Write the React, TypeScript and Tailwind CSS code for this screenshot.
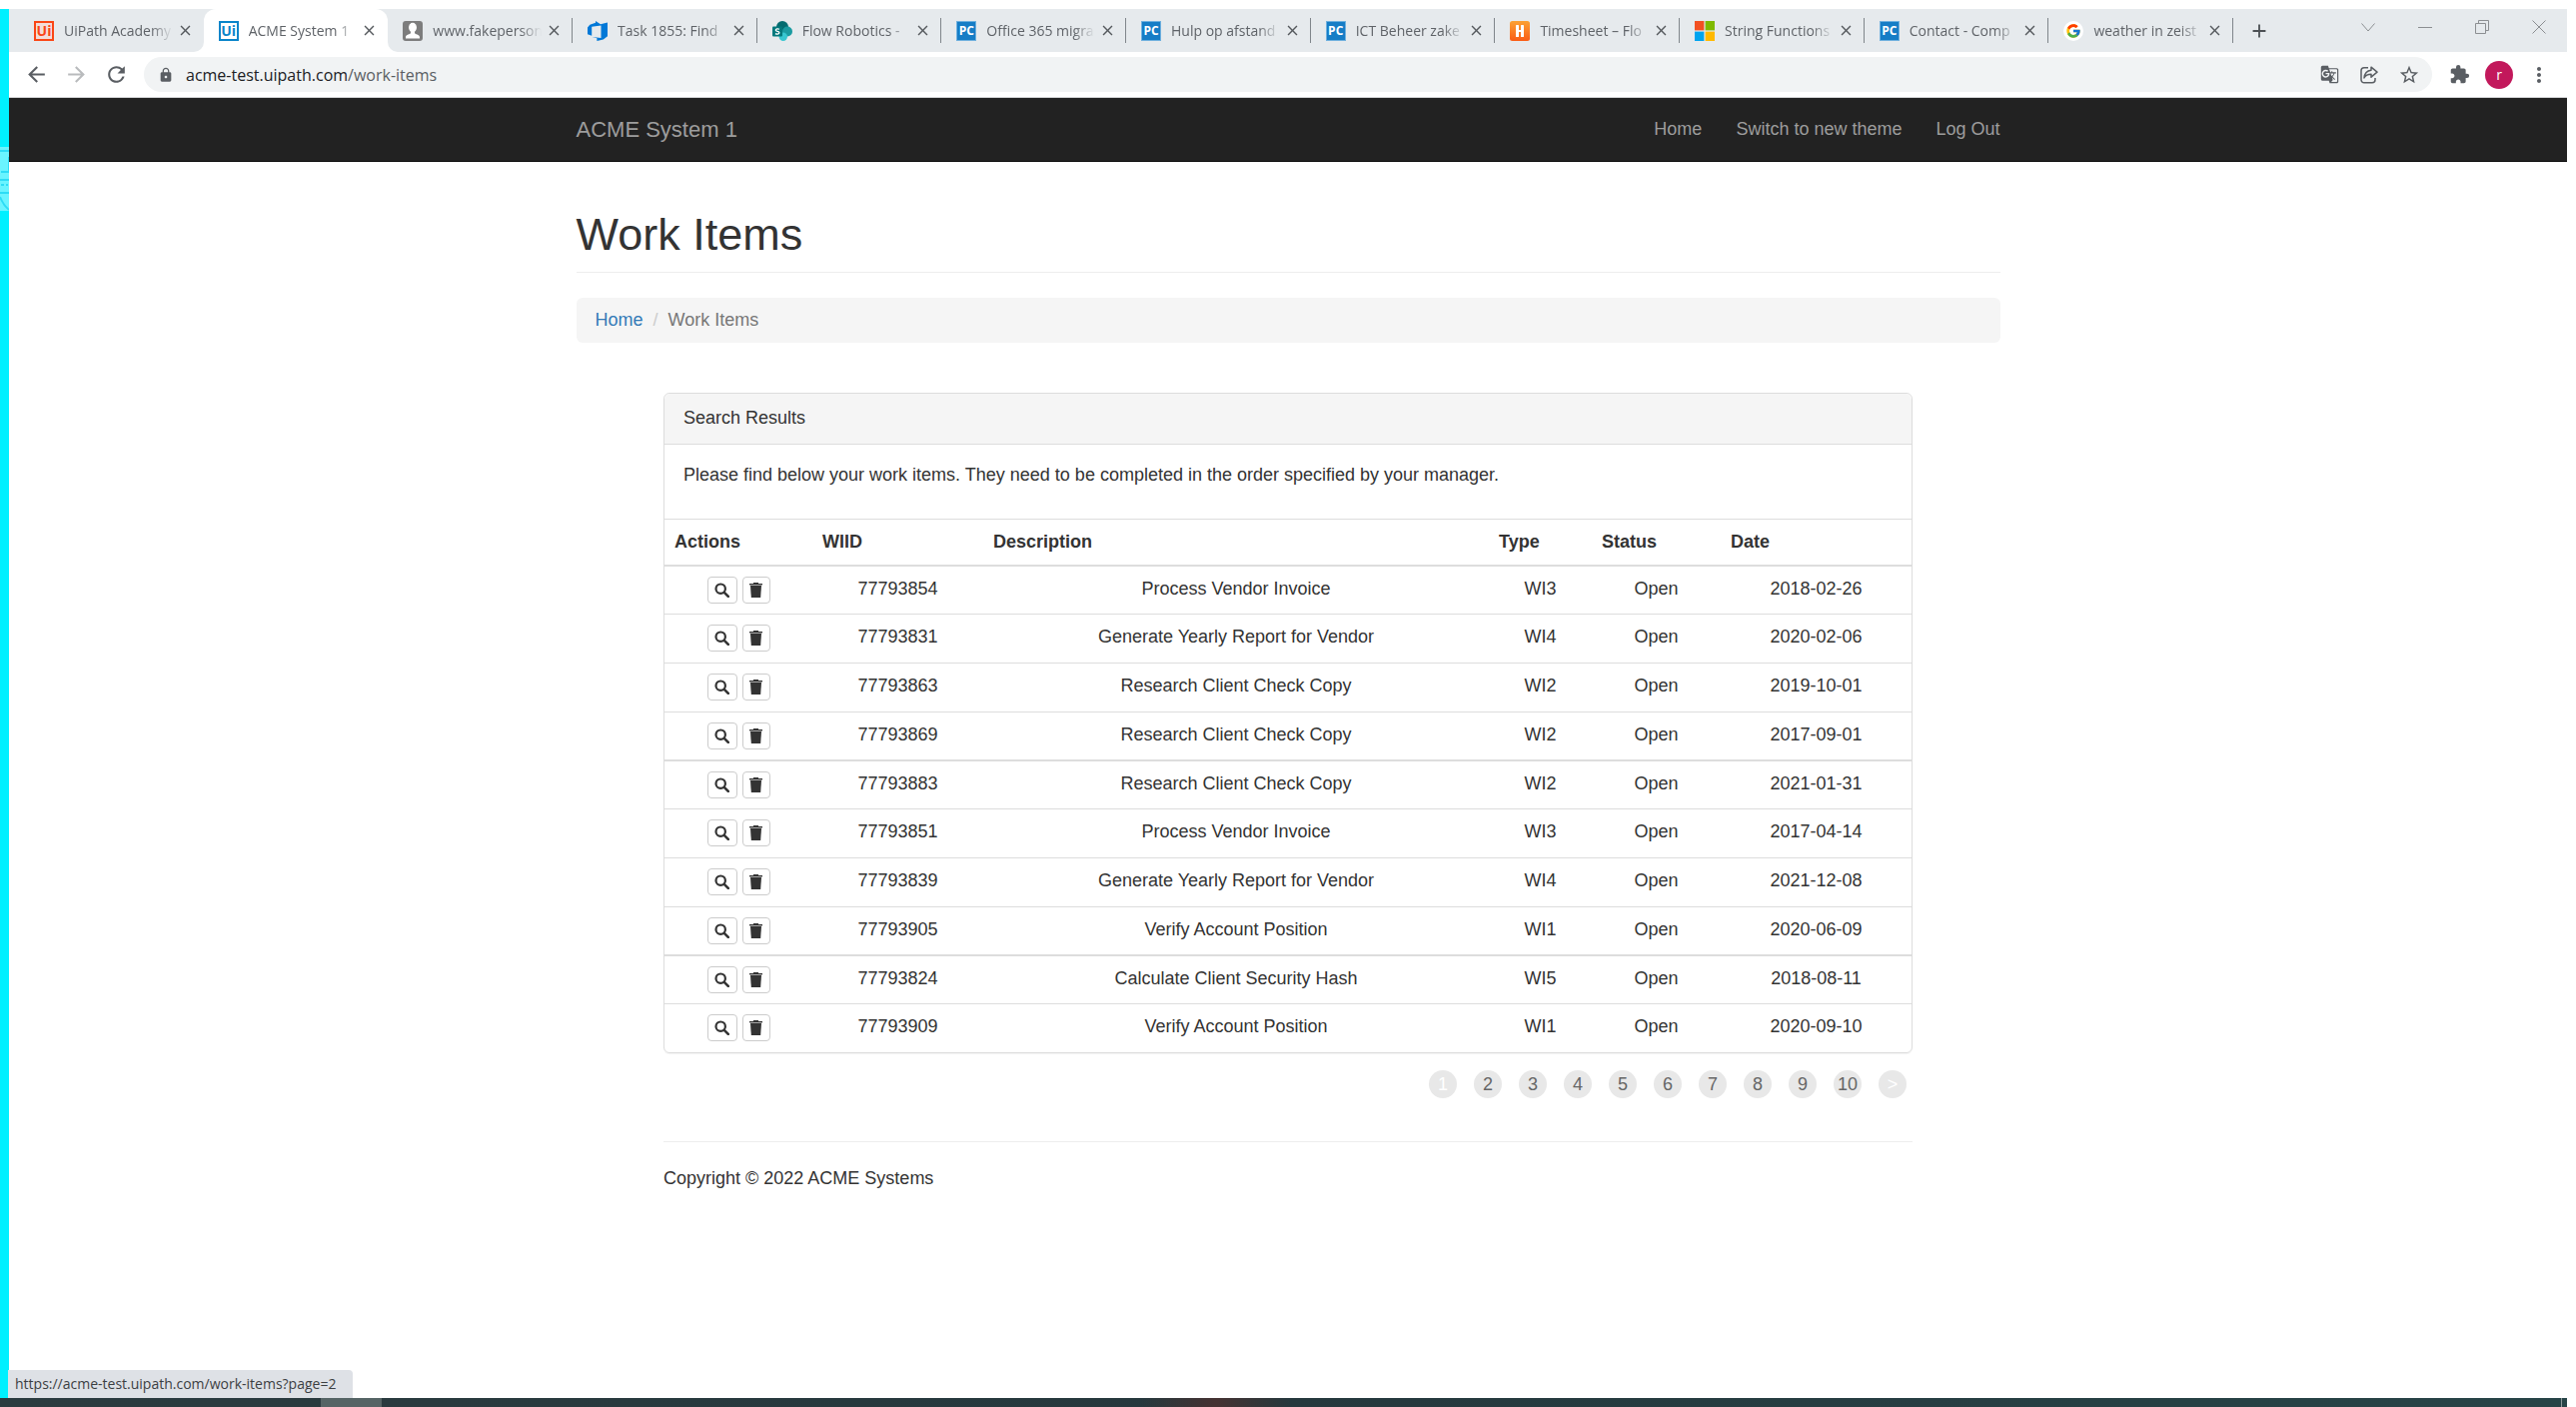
import React from "react";
import {
  MdArrowBack,
  MdArrowForward,
  MdRefresh,
  MdLock,
  MdGTranslate,
  MdStarBorder,
  MdExtension,
  MdMoreVert,
  MdClose,
  MdAdd,
} from "react-icons/md";
import { FcGoogle } from "react-icons/fc";

const UI_FONT = "font-['Open_Sans','Noto_Sans',sans-serif]";
const PAGE_FONT = "font-['Liberation_Sans',Arial,sans-serif]";

function UiOrange() {
  return (
    <span className="flex size-5 items-center justify-center border-2 border-[#fa4616] bg-[#f3dcd8] text-sm leading-none font-bold text-[#fa4616]">
      Ui
    </span>
  );
}

function UiBlue() {
  return (
    <span className="flex size-5 items-center justify-center border-2 border-[#0a85ca] bg-white text-sm leading-none font-bold text-[#0a85ca]">
      Ui
    </span>
  );
}

function PcIcon() {
  return (
    <span className="flex size-5 items-center justify-center border border-[#6fb0de] bg-[#167dc6] text-xs leading-none font-bold text-white">
      PC
    </span>
  );
}

function HIcon() {
  return (
    <svg viewBox="0 0 20 20" className="size-5">
      <defs>
        <linearGradient id="harvest" x1="0" y1="0" x2="0" y2="1">
          <stop offset="0" stopColor="#fba133" />
          <stop offset="1" stopColor="#fa5d16" />
        </linearGradient>
      </defs>
      <rect width="20" height="20" rx="2.5" fill="url(#harvest)" />
      <rect x="6" y="4" width="3" height="12" rx="0.6" fill="#fff" />
      <rect x="11" y="4" width="3" height="12" rx="0.6" fill="#fff" />
      <rect x="8" y="9" width="4" height="2" fill="#fff" />
    </svg>
  );
}

function PersonIcon() {
  return (
    <svg viewBox="0 0 20 20" className="size-5">
      <rect width="20" height="20" rx="3" fill="#7d7d7d" />
      <ellipse cx="10" cy="6.6" rx="4" ry="4.8" fill="#fff" />
      <path d="M8 10h4v2.2c0 .8 5 1.4 5 3.8v1.500H3V16c0-2.400 5-3 5-3.800z" fill="#fff" />
    </svg>
  );
}

function DevOpsIcon() {
  return (
    <svg viewBox="0 0 20 20" className="size-5">
      <path
        fill="#0078d7"
        d="M0 6.600 2.300 3.800 8 1.700V0l5 3.200 7-1.700v13.700l-4.200 3.300-6.400 1.500v-2.700L4.600 16l8.900 1V4.500L4.200 5.800v9L0 13.200z"
      />
    </svg>
  );
}

function SharePointIcon() {
  return (
    <svg viewBox="0 0 20 20" className="size-5">
      <circle cx="10" cy="6" r="6" fill="#036c70" />
      <circle cx="15" cy="10.500" r="5" fill="#1a9ba1" />
      <circle cx="10.800" cy="15.800" r="4.200" fill="#37c6d0" />
      <rect y="5.500" width="10" height="10" rx="1" fill="#03787c" />
      <path
        d="M7 8.300C5.500 7.500 3.300 7.800 3.300 9.200c0 1.600 3.600.9 3.600 2.600 0 1.400-2.500 1.600-3.900.8"
        fill="none"
        stroke="#fff"
        strokeWidth="1.300"
      />
    </svg>
  );
}

function MicrosoftIcon() {
  return (
    <svg viewBox="0 0 20 20" className="size-5">
      <path fill="#f25022" d="M0 0h9.400v9.400H0z" />
      <path fill="#7fba00" d="M10.600 0H20v9.400h-9.400z" />
      <path fill="#00a4ef" d="M0 10.600h9.400V20H0z" />
      <path fill="#ffb900" d="M10.600 10.600H20V20h-9.400z" />
    </svg>
  );
}

function GoogleIcon() {
  return (
    <span className="flex size-5 items-center justify-center rounded-full bg-white">
      <FcGoogle className="size-4" />
    </span>
  );
}

const tabs = [
  { title: "UiPath Academy", icon: <UiOrange /> },
  { title: "ACME System 1", icon: <UiBlue />, active: true },
  { title: "www.fakeperson", icon: <PersonIcon /> },
  { title: "Task 1855: Find", icon: <DevOpsIcon /> },
  { title: "Flow Robotics -", icon: <SharePointIcon /> },
  { title: "Office 365 migra", icon: <PcIcon /> },
  { title: "Hulp op afstand", icon: <PcIcon /> },
  { title: "ICT Beheer zake", icon: <PcIcon /> },
  { title: "Timesheet – Flo", icon: <HIcon /> },
  { title: "String Functions", icon: <MicrosoftIcon /> },
  { title: "Contact - Comp", icon: <PcIcon /> },
  { title: "weather in zeist", icon: <GoogleIcon /> },
];

function TabStrip() {
  return (
    <div className="flex h-[43px] items-stretch bg-[#e6eaed] pl-2.5">
      <div className="flex min-w-0 max-w-[2216px] flex-1">
        {tabs.map((tab, i) => (
          <div
            key={tab.title}
            className={
              tab.active
                ? "relative flex min-w-0 flex-1 items-center rounded-t-xl bg-white pr-2.5 pl-[15px]"
                : "relative flex min-w-0 flex-1 items-center pr-2.5 pl-[15px]"
            }
          >
            {tab.active && (
              <>
                <svg viewBox="0 0 10 10" className="absolute bottom-0 -left-2.5 size-2.5">
                  <path d="M10 0v10H0A10 10 0 0 0 10 0z" fill="#fff" />
                </svg>
                <svg viewBox="0 0 10 10" className="absolute -right-2.5 bottom-0 size-2.5">
                  <path d="M0 0v10h10A10 10 0 0 1 0 0z" fill="#fff" />
                </svg>
              </>
            )}
            <span className="shrink-0">{tab.icon}</span>
            <span className="ml-2.5 min-w-0 flex-1 overflow-hidden text-sm whitespace-nowrap text-[#5f6368] [mask-image:linear-gradient(to_right,black_80%,transparent)]">
              {tab.title}
            </span>
            <button aria-label={`Close ${tab.title}`} className="ml-1 shrink-0">
              <MdClose className="size-[17px] text-[#55595d]" />
            </button>
            {i > 1 && <span className="absolute top-[9px] right-0 h-[25px] w-px bg-[#80868b]" />}
          </div>
        ))}
      </div>
      <button aria-label="New tab" className="flex w-[52px] items-center justify-center">
        <MdAdd className="size-[22px] text-[#4d5155]" />
      </button>
      <div className="ml-auto flex h-9 text-[#8c8f92]">
        <button aria-label="Search tabs" className="flex w-[57px] items-center justify-center">
          <svg viewBox="0 0 14 14" className="size-3.5" fill="none" stroke="currentColor">
            <path d="m.5 3.500 6.500 7.500 6.500-7.500" />
          </svg>
        </button>
        <button aria-label="Minimize" className="flex w-[57px] items-center justify-center">
          <svg viewBox="0 0 14 14" className="size-3.5" fill="none" stroke="currentColor">
            <path d="M0 7.500h14" />
          </svg>
        </button>
        <button aria-label="Restore" className="flex w-[57px] items-center justify-center">
          <svg viewBox="0 0 14 14" className="size-3.5" fill="none" stroke="currentColor">
            <path d="M.5 3.500h10v10H.5zM3.500 3.500v-3h10v10h-3" />
          </svg>
        </button>
        <button aria-label="Close window" className="flex w-[57px] items-center justify-center">
          <svg viewBox="0 0 14 14" className="size-3.5" fill="none" stroke="currentColor">
            <path d="m.5.500 13 13M13.500.500l-13 13" />
          </svg>
        </button>
      </div>
    </div>
  );
}

function Toolbar() {
  return (
    <div className="flex h-[46px] items-center border-b border-[#d5d6d8] bg-white pr-2 pl-[7px] text-[#5a5e63]">
      <button aria-label="Back" className="flex w-10 justify-center">
        <MdArrowBack className="size-[25px]" />
      </button>
      <button aria-label="Forward" className="flex w-10 justify-center text-[#b9bbbd]">
        <MdArrowForward className="size-[25px]" />
      </button>
      <button aria-label="Reload" className="flex w-10 justify-center">
        <MdRefresh className="size-[25px]" />
      </button>
      <div className="ml-2 flex h-[35px] min-w-0 flex-1 items-center rounded-full bg-[#f1f3f4] pr-[3px] pl-3.5">
        <MdLock className="size-4 shrink-0" />
        <span className="ml-3 flex-1 text-base">
          <span className="text-[#202124]">acme-test.uipath.com</span>/work-items
        </span>
        <button aria-label="Translate" className="flex w-10 justify-center">
          <MdGTranslate className="size-[19px]" />
        </button>
        <button aria-label="Share" className="flex w-10 justify-center">
          <svg
            viewBox="0 0 18 18"
            className="size-[18px]"
            fill="none"
            stroke="currentColor"
            strokeWidth="1.500"
            strokeLinejoin="round"
          >
            <path d="M8 1.800H4A3 3 0 0 0 1 4.800v9a3 3 0 0 0 3 3h8a3 3 0 0 0 3-3V12" />
            <path d="M11 1.200 17 6.200l-6 5V8.300c-3.500 0-5.600 1.200-7 3.700.4-4.200 2.800-7.300 7-7.800z" />
          </svg>
        </button>
        <button aria-label="Bookmark" className="flex w-10 justify-center">
          <MdStarBorder className="size-[22px]" />
        </button>
      </div>
      <button aria-label="Extensions" className="ml-[7px] flex w-10 justify-center">
        <MdExtension className="size-[21px]" />
      </button>
      <button
        aria-label="Profile"
        className="mx-1.5 flex size-7 items-center justify-center rounded-full bg-[#c2185b] text-sm text-white"
      >
        r
      </button>
      <button aria-label="Menu" className="flex w-10 justify-center">
        <MdMoreVert className="size-6" />
      </button>
    </div>
  );
}

function SearchGlyph() {
  return (
    <svg viewBox="0 0 15 15" className="size-[15px]" fill="none" stroke="#333">
      <circle cx="6.200" cy="6.200" r="4.700" strokeWidth="2.200" />
      <path d="m9.800 9.800 4 4" strokeWidth="2.600" strokeLinecap="round" />
    </svg>
  );
}

function TrashGlyph() {
  return (
    <svg viewBox="0 0 13 15" className="h-[15px] w-[13px]">
      <path d="M4 1V0h5v1h4v1H0V1z" fill="#333" />
      <path d="M0 2h13v1H0z" fill="#a5a5a5" />
      <path d="M1 3h11l-.8 12H1.800z" fill="#333" />
    </svg>
  );
}

const items = [
  ["77793854", "Process Vendor Invoice", "WI3", "Open", "2018-02-26"],
  ["77793831", "Generate Yearly Report for Vendor", "WI4", "Open", "2020-02-06"],
  ["77793863", "Research Client Check Copy", "WI2", "Open", "2019-10-01"],
  ["77793869", "Research Client Check Copy", "WI2", "Open", "2017-09-01"],
  ["77793883", "Research Client Check Copy", "WI2", "Open", "2021-01-31"],
  ["77793851", "Process Vendor Invoice", "WI3", "Open", "2017-04-14"],
  ["77793839", "Generate Yearly Report for Vendor", "WI4", "Open", "2021-12-08"],
  ["77793905", "Verify Account Position", "WI1", "Open", "2020-06-09"],
  ["77793824", "Calculate Client Security Hash", "WI5", "Open", "2018-08-11"],
  ["77793909", "Verify Account Position", "WI1", "Open", "2020-09-10"],
];

function rowClass(i: number) {
  if (i === items.length - 1) return "h-12 [&>td]:align-top";
  if (i % 4 === 0) return "h-12 [&>td]:border-b [&>td]:border-[#ddd] [&>td]:align-top";
  if (i % 4 === 3) return "h-[49px] [&>td]:border-b-2 [&>td]:border-[#ddd] [&>td]:align-top";
  return "h-[49px] [&>td]:border-b [&>td]:border-[#ddd] [&>td]:align-top";
}

function WorkItemsTable() {
  return (
    <table className="w-full table-fixed border-separate border-spacing-0 border-t border-[#ddd]">
      <colgroup>
        <col className="w-[148px]" />
        <col className="w-[171px]" />
        <col />
        <col className="w-[103px]" />
        <col className="w-[129px]" />
        <col className="w-[191px]" />
      </colgroup>
      <thead>
        <tr className="h-[47px]">
          {["Actions", "WIID", "Description", "Type", "Status", "Date"].map((h) => (
            <th key={h} className="border-b-2 border-[#ddd] px-2.5 pt-2.5 text-left align-top font-bold">
              {h}
            </th>
          ))}
        </tr>
      </thead>
      <tbody>
        {items.map((row, i) => (
          <tr key={row[0]} className={rowClass(i)}>
            <td className="pt-2.5">
              <div className="flex justify-center gap-[5px]">
                <button
                  aria-label={`View ${row[0]}`}
                  className="flex h-[27px] w-[30px] items-center justify-center rounded-sm border border-[#ccc] bg-white"
                >
                  <SearchGlyph />
                </button>
                <button
                  aria-label={`Delete ${row[0]}`}
                  className="flex h-[27px] w-7 items-center justify-center rounded-sm border border-[#ccc] bg-white"
                >
                  <TrashGlyph />
                </button>
              </div>
            </td>
            {row.map((cell, c) => (
              <td key={c} className="px-2.5 pt-2.5 text-center">
                {cell}
              </td>
            ))}
          </tr>
        ))}
      </tbody>
    </table>
  );
}

function Pagination() {
  return (
    <nav aria-label="Pages" className="mt-[17px] mr-1.5 flex justify-end gap-[17px]">
      {["1", "2", "3", "4", "5", "6", "7", "8", "9", "10", ">"].map((p) => (
        <a
          key={p}
          href="#"
          className={
            p === "1" || p === ">"
              ? "flex size-7 items-center justify-center rounded-full bg-[#e8e8e8] text-white"
              : "flex size-7 items-center justify-center rounded-full bg-[#e8e8e8] text-[#666]"
          }
        >
          {p}
        </a>
      ))}
    </nav>
  );
}

function Page() {
  return (
    <div className={`${PAGE_FONT} flex-1 bg-white text-lg leading-[25px] text-[#333]`}>
      <header className="border-b border-[#080808] bg-[#222]">
        <div className="mx-auto flex h-[63px] max-w-[1425px] items-center text-[#9d9d9d]">
          <a href="#" className="text-[22px]">
            ACME System 1
          </a>
          <nav className="ml-auto flex gap-[34px]">
            <a href="#">Home</a>
            <a href="#">Switch to new theme</a>
            <a href="#">Log Out</a>
          </nav>
        </div>
      </header>
      <main className="mx-auto max-w-[1425px]">
        <h1 className="border-b border-[#eee] pt-12 pb-3 text-[45px] leading-[50px]">Work Items</h1>
        <nav aria-label="Breadcrumb" className="mt-[25px] flex rounded-md bg-[#f5f5f5] px-[19px] py-2.5">
          <a href="#" className="text-[#337ab7]">
            Home
          </a>
          <span className="px-2.5 text-[#ccc]">/</span>
          <span className="text-[#777]">Work Items</span>
        </nav>
        <div className="mx-auto mt-[50px] max-w-[1250px]">
          <section className="rounded-md border border-[#ddd] shadow-[0_1px_1px_rgba(0,0,0,0.05)]">
            <h2 className="rounded-t-md border-b border-[#ddd] bg-[#f5f5f5] px-[19px] pt-3 pb-[13px]">Search Results</h2>
            <p className="px-[19px] pt-[18px] pb-[31px]">
              Please find below your work items. They need to be completed in the order specified by your manager.
            </p>
            <WorkItemsTable />
          </section>
          <Pagination />
          <footer className="mt-[43px] border-t border-[#eee] pt-6">Copyright © 2022 ACME Systems</footer>
        </div>
      </main>
    </div>
  );
}

function DesktopEdge() {
  return (
    <div className="w-[9px] shrink-0 bg-[#00f0ff] pt-[126px]">
      <svg viewBox="0 0 9 76" className="h-[76px] w-[9px]">
        <rect y="12" width="9" height="64" fill="#6af4ff" />
        <path
          d="M0 16h9M9 22v15H1M0 45h9M1 50h3M6 50h2M0 58h9M0 62q3 8 9 13"
          fill="none"
          stroke="#2edcf5"
          strokeWidth="2"
        />
      </svg>
    </div>
  );
}

export default function App() {
  return (
    <div className={`${UI_FONT} flex min-h-screen flex-col bg-white pt-[9px]`}>
      <div className="relative flex flex-1 pr-[9px]">
        <DesktopEdge />
        <div className="flex min-w-0 flex-1 flex-col">
          <TabStrip />
          <Toolbar />
          <Page />
        </div>
        <div className="absolute bottom-0 left-2 flex h-7 items-center rounded-tr bg-[#dee1e6] pr-[17px] pl-[7px] text-sm text-[#3c4043]">
          https://acme-test.uipath.com/work-items?page=2
        </div>
      </div>
      <div className="mr-[9px] flex h-[9px] bg-linear-to-r from-[#2b3b3f] via-[#25383d] to-[#274447]">
        <div className="ml-[321px] w-[61px] bg-[#556465]" />
        <div className="ml-[760px] w-[150px] bg-linear-to-r from-[#2b3b3f00] via-[#453232] to-[#25383d00]" />
        <div className="mr-[5px] ml-auto w-px bg-[#8d9a9c]" />
      </div>
    </div>
  );
}
